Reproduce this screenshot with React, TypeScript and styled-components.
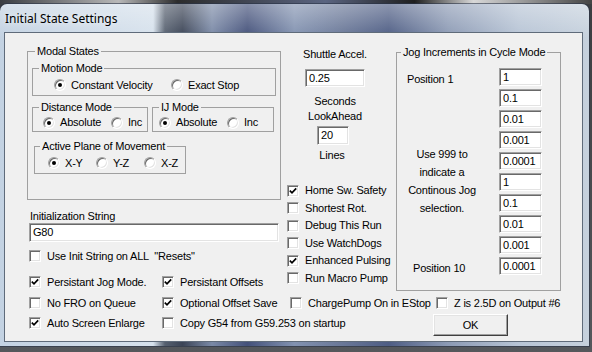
import React from "react";
import styled, { createGlobalStyle } from "styled-components";

const GlobalStyle = createGlobalStyle`
  html, body { margin: 0; padding: 0; }
  body { font-family: "Liberation Sans", Arial, sans-serif; }
`;

const Desktop = styled.div`
  width: 592px;
  height: 352px;
  overflow: hidden;
  box-sizing: border-box;
  padding-top: 4px;
  background:
    linear-gradient(90deg, #3a3d42 0%, #b8b8b8 20%, #2c2c2c 30%, #5a6480 55%, #1f1f1f 70%, #d8d8d8 80%, #444 100%) top / 100% 4px no-repeat,
    linear-gradient(180deg, #3b3d40 0%, #55585c 100%);
`;

const Window = styled.div`
  width: 589px;
  height: 342px;
  box-sizing: border-box;
  border-radius: 7px 7px 0 0;
  padding: 0 6px 4px 4px;
  display: flex;
  flex-direction: column;
  background:
    linear-gradient(180deg, rgba(255, 255, 255, 0.35) 0%, rgba(255, 255, 255, 0) 10%),
    linear-gradient(90deg, #c3d2e2 0%, #d6e1ec 26%, #56606f 28%, #3b4456 31%, #7a89a6 36%, #44517a 42%, #8292b0 50%, #6a7898 58%, #4e5d84 66%, #8c9ab4 76%, #b7c4d5 88%, #c6d1dd 100%);
  box-shadow: 0 0 0 1px rgba(40, 50, 70, 0.6);
`;

const TitleBar = styled.div`
  height: 28px;
  flex: none;
  display: flex;
  align-items: center;
  padding-left: 1px;
  font-family: "Noto Sans", "Open Sans", sans-serif;
  font-size: 12px;
  color: #000;
  text-shadow: 0 0 6px rgba(255, 255, 255, 0.9);
`;

const Client = styled.div`
  flex: 1;
  background: #f0f0f0;
  border: 1px solid #5f6b7a;
  display: flex;
  flex-direction: column;
  font-size: 11px;
  letter-spacing: -0.2px;
  color: #000;
  line-height: 13px;
`;

const TopSection = styled.div`
  display: flex;
  align-items: flex-start;
  padding-left: 22px;
`;

const LeftCol = styled.div`
  width: 254px;
  margin-top: 12px;
  display: flex;
  flex-direction: column;
`;

const MidCol = styled.div`
  width: 100px;
  margin: 15px 0 0 4px;
  display: flex;
  flex-direction: column;
  align-items: center;
`;

const RightCol = styled.div`
  margin: 13px 0 0 11px;
`;

const Group = styled.fieldset<{ $w?: number; $mt?: number; $ml?: number }>`
  margin: ${(p) => p.$mt ?? 0}px 0 0 ${(p) => p.$ml ?? 0}px;
  padding: 0;
  min-width: 0;
  box-sizing: border-box;
  border: 1px solid #a0a0a0;
  ${(p) => (p.$w ? `width: ${p.$w}px;` : "")}
`;

const Legend = styled.legend<{ $indent: number }>`
  padding: 0 2px;
  margin-left: ${(p) => p.$indent}px;
  font-size: 11px;
  line-height: 13px;
`;

const ModalBody = styled.div`
  padding: 4px 4px 25px 4px;
  display: flex;
  flex-direction: column;
`;

const GroupPair = styled.div`
  display: flex;
  gap: 4px;
  margin-top: 5px;
`;

const RadioRow = styled.div<{ $h: number; $pl: number }>`
  height: ${(p) => p.$h}px;
  padding-left: ${(p) => p.$pl}px;
  display: flex;
  align-items: center;
`;

const RadioItem = styled.label<{ $w?: number }>`
  display: flex;
  align-items: center;
  ${(p) => (p.$w ? `width: ${p.$w}px;` : "")}
  white-space: nowrap;
`;

const RadioCircle = styled.span<{ $on?: boolean }>`
  position: relative;
  flex: none;
  width: 12px;
  height: 12px;
  box-sizing: border-box;
  border-radius: 50%;
  border: 1px solid;
  border-color: #a0a0a0 #ffffff #ffffff #a0a0a0;
  background: #fff;
  box-shadow: inset 1px 1px 0 #696969, inset -1px -1px 0 #e3e3e3;
  margin-right: 5px;
  &::after {
    content: "";
    display: ${(p) => (p.$on ? "block" : "none")};
    position: absolute;
    left: 3px;
    top: 3px;
    width: 4px;
    height: 4px;
    border-radius: 50%;
    background: #000;
  }
`;

const Caption = styled.div<{ $ml?: number; $mt?: number; $mr?: number; $lh?: number }>`
  margin: ${(p) => p.$mt ?? 0}px ${(p) => p.$mr ?? 0}px 0 ${(p) => p.$ml ?? 0}px;
  line-height: ${(p) => p.$lh ?? 13}px;
  text-align: center;
  white-space: nowrap;
`;

const LeftCaption = styled(Caption)`
  text-align: left;
`;

const TextBox = styled.div<{ $w: number; $h: number; $mt?: number; $ml?: number; $mr?: number }>`
  width: ${(p) => p.$w}px;
  height: ${(p) => p.$h}px;
  margin: ${(p) => p.$mt ?? 0}px ${(p) => p.$mr ?? 0}px 0 ${(p) => p.$ml ?? 0}px;
  box-sizing: border-box;
  background: #fff;
  border: 1px solid;
  border-color: #a0a0a0 #ffffff #ffffff #a0a0a0;
  box-shadow: inset 1px 1px 0 #696969, inset -1px -1px 0 #e3e3e3;
  padding-left: 3px;
  display: flex;
  align-items: center;
  font-size: 11px;
  flex: none;
`;

const CheckRow = styled.label<{ $h?: number; $mt?: number; $ml?: number; $w?: number; $span?: number }>`
  display: flex;
  align-items: center;
  height: ${(p) => p.$h ?? 16}px;
  margin: ${(p) => p.$mt ?? 0}px 0 0 ${(p) => p.$ml ?? 0}px;
  ${(p) => (p.$w ? `width: ${p.$w}px; flex: none;` : "")}
  ${(p) => (p.$span ? `grid-column: span ${p.$span};` : "")}
  white-space: pre;
`;

const Box = styled.span`
  flex: none;
  width: 12px;
  height: 12px;
  box-sizing: border-box;
  background: #fff;
  border: 1px solid;
  border-color: #a0a0a0 #ffffff #ffffff #a0a0a0;
  box-shadow: inset 1px 1px 0 #696969, inset -1px -1px 0 #e3e3e3;
  margin-right: 6px;
  display: flex;
  align-items: center;
  justify-content: center;
`;

const InlineChecks = styled.div<{ $mt: number; $ml: number }>`
  display: flex;
  margin: ${(p) => p.$mt}px 0 0 ${(p) => p.$ml}px;
`;

const MidChecks = styled.div`
  align-self: stretch;
  margin-top: 20px;
  padding-left: 2px;
  display: flex;
  flex-direction: column;
`;

const JogBody = styled.div`
  display: grid;
  grid-template-columns: 92px 43px;
  grid-template-rows: repeat(10, 18px);
  row-gap: 3px;
  padding: 9px 17px 15px 10px;
`;

const JogLabel = styled.div<{ $row: number; $ml?: number }>`
  grid-column: 1;
  grid-row: ${(p) => p.$row};
  align-self: center;
  margin: 4px 0 0 ${(p) => p.$ml ?? 0}px;
  white-space: nowrap;
`;

const JogNote = styled.div`
  grid-column: 1;
  grid-row: 4 / span 5;
  align-self: start;
  margin-top: 14px;
  width: 70px;
  line-height: 18px;
  text-align: center;
`;

const JogField = styled(TextBox)`
  grid-column: 2;
`;

const BottomGrid = styled.div`
  display: grid;
  grid-template-columns: 133px 128px 146px 1fr;
  grid-template-rows: 16px 22px;
  row-gap: 4px;
  align-items: start;
  padding: 4px 0 0 24px;
`;

const OkButton = styled.button`
  grid-column: 4;
  margin: -1px 0 0 -3px;
  width: 75px;
  height: 22px;
  box-sizing: border-box;
  background: #f0f0f0;
  border: 1px solid;
  border-color: #ffffff #404040 #404040 #ffffff;
  box-shadow: inset -1px -1px 0 #a0a0a0, inset 1px 1px 0 #e3e3e3;
  font-family: "Liberation Sans", Arial, sans-serif;
  font-size: 11px;
  letter-spacing: -0.2px;
  color: #000;
  padding: 0;
`;

const Tick = () => (
  <svg width="8" height="8" viewBox="0 0 8 8">
    <polyline points="0.8,3.6 3,5.8 7.2,1.4" fill="none" stroke="#000" strokeWidth="1.7" />
  </svg>
);

const Check: React.FC<{ label: string; on?: boolean; mt?: number; ml?: number; w?: number; h?: number; span?: number }> = ({
  label,
  on,
  mt,
  ml,
  w,
  h,
  span,
}) => (
  <CheckRow $mt={mt} $ml={ml} $w={w} $h={h} $span={span}>
    <Box>{on && <Tick />}</Box>
    {label}
  </CheckRow>
);

const Radio: React.FC<{ label: string; on?: boolean; w?: number }> = ({ label, on, w }) => (
  <RadioItem $w={w}>
    <RadioCircle $on={on} />
    {label}
  </RadioItem>
);

const midChecks: [string, boolean][] = [
  ["Home Sw. Safety", true],
  ["Shortest Rot.", false],
  ["Debug This Run", false],
  ["Use WatchDogs", false],
  ["Enhanced Pulsing", true],
  ["Run Macro Pump", false],
];

const jogValues = ["1", "0.1", "0.01", "0.001", "0.0001", "1", "0.1", "0.01", "0.001", "0.0001"];

export default function App() {
  return (
    <>
      <GlobalStyle />
      <Desktop>
        <Window>
          <TitleBar>Initial State Settings</TitleBar>
          <Client>
            <TopSection>
              <LeftCol>
                <Group $w={254}>
                  <Legend $indent={7}>Modal States</Legend>
                  <ModalBody>
                    <Group>
                      <Legend $indent={6}>Motion Mode</Legend>
                      <RadioRow $h={20} $pl={21}>
                        <Radio label="Constant Velocity" on w={117} />
                        <Radio label="Exact Stop" />
                      </RadioRow>
                    </Group>
                    <GroupPair>
                      <Group $w={116}>
                        <Legend $indent={6}>Distance Mode</Legend>
                        <RadioRow $h={17} $pl={10}>
                          <Radio label="Absolute" on w={68} />
                          <Radio label="Inc" />
                        </RadioRow>
                      </Group>
                      <Group $w={122}>
                        <Legend $indent={6}>IJ Mode</Legend>
                        <RadioRow $h={17} $pl={6}>
                          <Radio label="Absolute" on w={68} />
                          <Radio label="Inc" />
                        </RadioRow>
                      </Group>
                    </GroupPair>
                    <Group $w={152} $mt={8} $ml={2}>
                      <Legend $indent={5}>Active Plane of Movement</Legend>
                      <RadioRow $h={20} $pl={13}>
                        <Radio label="X-Y" on w={48} />
                        <Radio label="Y-Z" w={48} />
                        <Radio label="X-Z" />
                      </RadioRow>
                    </Group>
                  </ModalBody>
                </Group>
                <LeftCaption $mt={10} $ml={3}>Initialization String</LeftCaption>
                <TextBox $w={250} $h={19} $ml={2}>G80</TextBox>
                <Check label={'Use Init String on ALL  "Resets"'} mt={6} ml={2} />
                <InlineChecks $mt={10} $ml={2}>
                  <Check label="Persistant Jog Mode." on w={133} />
                  <Check label="Persistant Offsets" on />
                </InlineChecks>
              </LeftCol>
              <MidCol>
                <Caption>Shuttle Accel.</Caption>
                <TextBox $w={60} $h={18} $mt={8}>0.25</TextBox>
                <Caption $mt={7} $lh={15}>
                  Seconds
                  <br />
                  LookAhead
                </Caption>
                <TextBox $w={32} $h={19} $mt={2} $mr={4}>20</TextBox>
                <Caption $mt={4} $mr={6}>Lines</Caption>
                <MidChecks>
                  {midChecks.map(([label, on]) => (
                    <Check key={label} label={label} on={on} h={17.5} />
                  ))}
                </MidChecks>
              </MidCol>
              <RightCol>
                <Group $w={165}>
                  <Legend $indent={4}>Jog Increments in Cycle Mode</Legend>
                  <JogBody>
                    <JogLabel $row={1}>Position 1</JogLabel>
                    <JogNote>
                      Use 999 to
                      <br />
                      indicate a
                      <br />
                      Continous Jog
                      <br />
                      selection.
                    </JogNote>
                    <JogLabel $row={10} $ml={6}>Position 10</JogLabel>
                    {jogValues.map((v, i) => (
                      <JogField key={i} $w={43} $h={18} style={{ gridRow: i + 1 }}>
                        {v}
                      </JogField>
                    ))}
                  </JogBody>
                </Group>
              </RightCol>
            </TopSection>
            <BottomGrid>
              <Check label="No FRO on Queue" />
              <Check label="Optional Offset Save" on />
              <Check label="ChargePump On in EStop" />
              <Check label="Z is 2.5D on Output #6" />
              <Check label="Auto Screen Enlarge" on />
              <Check label="Copy G54 from G59.253 on startup" span={2} />
              <OkButton>OK</OkButton>
            </BottomGrid>
          </Client>
        </Window>
      </Desktop>
    </>
  );
}
